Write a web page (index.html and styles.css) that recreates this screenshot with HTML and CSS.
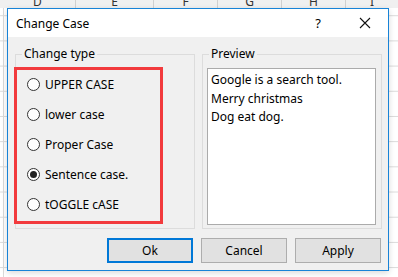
FILE: index.html
```html
<!DOCTYPE html>
<html lang="en">
<head>
  <meta charset="UTF-8">
  <title>Change Case</title>
  <link rel="stylesheet" href="styles.css">
</head>
<body>

  <!-- Spreadsheet column headers behind the dialog -->
  <div class="col-headers">
    <span class="col col-d">D</span>
    <span class="col col-e">E</span>
    <span class="col col-f">F</span>
    <span class="col col-g">G</span>
    <span class="col col-h">H</span>
    <span class="col col-i">I</span>
  </div>

  <!-- Change Case dialog -->
  <div class="dialog">
    <div class="title-bar">
      <span class="title">Change Case</span>
      <span class="help">?</span>
      <svg class="close" width="12" height="12" viewBox="0 0 12 12">
        <path d="M1 1 L11 11 M11 1 L1 11" stroke="#111" stroke-width="1.1" fill="none"/>
      </svg>
    </div>

    <div class="dialog-body">
      <div class="groups">
        <fieldset class="group">
          <legend>Change type</legend>
          <div class="highlight">
            <label class="radio-row"><span class="radio"></span>UPPER CASE</label>
            <label class="radio-row"><span class="radio"></span>lower case</label>
            <label class="radio-row"><span class="radio"></span>Proper Case</label>
            <label class="radio-row"><span class="radio checked"></span>Sentence case.</label>
            <label class="radio-row"><span class="radio"></span>tOGGLE cASE</label>
          </div>
        </fieldset>

        <fieldset class="group">
          <legend>Preview</legend>
          <div class="preview-box">
            <div>Google is a search tool.</div>
            <div>Merry christmas</div>
            <div>Dog eat dog.</div>
          </div>
        </fieldset>
      </div>

      <div class="buttons">
        <button class="btn btn-default">Ok</button>
        <button class="btn">Cancel</button>
        <button class="btn">Apply</button>
      </div>
    </div>
  </div>

</body>
</html>
```

FILE: styles.css
```css
/* General Styling */
body {
  margin: 0;
  width: 398px;
  height: 277px;
  overflow: hidden;
  font-family: "Noto Sans", "DejaVu Sans", sans-serif;
  font-size: 12px;
  color: #000;
  background-color: #fff;
  /* spreadsheet grid behind the dialog */
  background-image:
    linear-gradient(#f0f0f0, #f0f0f0),
    linear-gradient(to bottom, transparent 24px, #dadada 24px),
    linear-gradient(to right, #dadada 1px, transparent 1px);
  background-size: 398px 8px, 398px 25.2px, 100% 100%;
  background-repeat: no-repeat, repeat-y, no-repeat;
  background-position: 0 0, 0 -9px, 3px 0;
}

/* Column headers */
.col-headers {
  height: 8px;
  overflow: hidden;
  display: flex;
  position: relative;
}

.col {
  display: block;
  height: 8px;
  line-height: 4px;
  text-align: center;
  font-size: 12px;
  color: #333;
  border-right: 1px solid #d0d0d0;
  box-sizing: border-box;
}

.col-d { width: 76px; }
.col-e { width: 78px; }
.col-f { width: 64px; }
.col-g { width: 64px; }
.col-h { width: 64px; }
.col-i { width: 52px; border-right: none; }

/* Dialog */
.dialog {
  margin-left: 7px;
  width: 382px;
  height: 263px;
  box-sizing: border-box;
  border: 1px solid #1883d7;
  background-color: #f0f0f0;
  box-shadow: 0 2px 6px rgba(0, 0, 0, 0.15);
  position: relative;
}

.title-bar {
  height: 28px;
  background-color: #fff;
  display: flex;
  align-items: center;
  padding-left: 8px;
}

.title {
  flex: 1;
}

.help {
  width: 16px;
  text-align: center;
  margin-right: 33px;
  font-size: 13px;
}

.close {
  margin-right: 17px;
}

.dialog-body {
  padding: 9px 6px 7px 7px;
}

.groups {
  display: flex;
  gap: 7px;
}

.group {
  margin: 0;
  padding: 0;
  width: 180px;
  height: 183px;
  box-sizing: border-box;
  border: 1px solid #dcdcdc;
  min-width: 0;
}

.group legend {
  margin-left: 6px;
  padding: 0 2px;
  line-height: 16px;
}

/* Red box around the options */
.highlight {
  margin: 5px 0 0 -2px;
  width: 149px;
  height: 157px;
  box-sizing: border-box;
  border: 3px solid #f23a3d;
}

.radio-row {
  display: flex;
  align-items: center;
  height: 29.8px;
  padding-left: 10px;
}

.radio {
  width: 13px;
  height: 13px;
  box-sizing: border-box;
  border: 1px solid #333;
  border-radius: 50%;
  background-color: #fff;
  margin-right: 5px;
  position: relative;
}

.radio.checked::after {
  content: "";
  position: absolute;
  left: 2px;
  top: 2px;
  width: 7px;
  height: 7px;
  border-radius: 50%;
  background-color: #222;
}

/* Preview */
.preview-box {
  margin: 6px 0 0 4px;
  width: 169px;
  height: 157px;
  box-sizing: border-box;
  border: 1px solid #ababab;
  background-color: #fff;
  padding: 2px 3px;
  line-height: 18.5px;
}

/* Buttons */
.buttons {
  display: flex;
  justify-content: flex-end;
  gap: 8px;
  margin-top: 9px;
  padding-right: 1px;
}

.btn {
  width: 86px;
  height: 25px;
  box-sizing: border-box;
  border: 1px solid #adadad;
  background-color: #e1e1e1;
  font-family: inherit;
  font-size: 12px;
  color: #000;
  padding: 0;
}

.btn-default {
  border: 2px solid #0078d7;
}
```
